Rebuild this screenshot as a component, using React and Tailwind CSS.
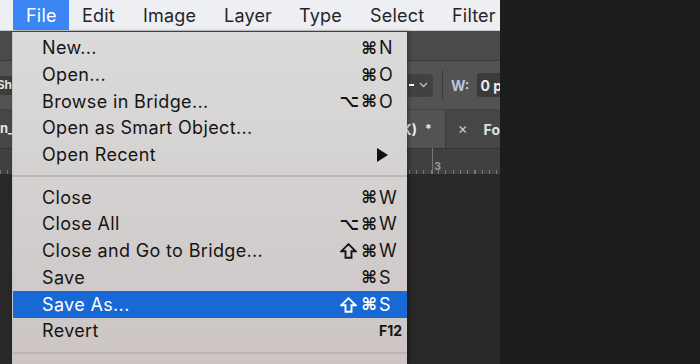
import React from "react";

const items = [
  { label: "New...", mods: "⌘", key: "N" },
  { label: "Open...", mods: "⌘", key: "O" },
  { label: "Browse in Bridge...", mods: "⌥⌘", key: "O" },
  { label: "Open as Smart Object..." },
  { label: "Open Recent", submenu: true },
  "sep",
  { label: "Close", mods: "⌘", key: "W" },
  { label: "Close All", mods: "⌥⌘", key: "W" },
  { label: "Close and Go to Bridge...", mods: "⇧⌘", key: "W" },
  { label: "Save", mods: "⌘", key: "S" },
  { label: "Save As...", mods: "⇧⌘", key: "S", active: true },
  { label: "Revert", key: "F12", small: true },
  "sep",
];

const menus = [
  { name: "File", w: "w-[56px]", active: true },
  { name: "Edit", w: "w-[61px]" },
  { name: "Image", w: "w-[81px]" },
  { name: "Layer", w: "w-[75px]" },
  { name: "Type", w: "w-[71px]" },
  { name: "Select", w: "w-[82px]" },
  { name: "Filter", w: "w-[61px]" },
];

function Shift({ color }) {
  return (
    <svg width="17" height="16" viewBox="0 0 17 16" className="mr-[2px]">
      <path
        d="M8.5 1.2 L15.5 8.2 L11.5 8.2 L11.5 14.8 L5.5 14.8 L5.5 8.2 L1.5 8.2 Z"
        fill="none"
        stroke={color}
        strokeWidth="1.9"
        strokeLinejoin="miter"
      />
    </svg>
  );
}

function Mods({ mods, color }) {
  if (!mods) return null;
  return (
    <span className="flex items-center">
      {[...mods].map((c, i) =>
        c === "⇧" ? (
          <Shift key={i} color={color} />
        ) : (
          <span
            key={i}
            className="ml-[2px] font-['DejaVu_Sans',sans-serif] text-[17px] font-bold leading-none"
          >
            {c}
          </span>
        )
      )}
    </span>
  );
}

function Row({ it }) {
  const color = it.active ? "text-white" : "text-[#151515]";
  return (
    <div
      className={`flex h-[26.7px] items-center pl-[29px] ${
        it.active ? "bg-[#1868d6]" : ""
      } ${color}`}
    >
      <span className="flex-1 whitespace-nowrap text-[18px] leading-none tracking-[0.35px]">
        {it.label}
      </span>
      {it.submenu ? (
        <svg width="12" height="14" viewBox="0 0 12 14" className="mr-[18px]">
          <path d="M0 0 L11 7 L0 14 Z" fill="#111" />
        </svg>
      ) : (
        <>
          <Mods mods={it.mods} color={it.active ? "#fff" : "#151515"} />
          <span
            className={`ml-[2px] w-[28px] whitespace-nowrap leading-none ${
              it.small ? "text-[14px] font-bold" : "text-[18px]"
            }`}
          >
            {it.key || ""}
          </span>
        </>
      )}
    </div>
  );
}

export default function App() {
  return (
    <div className="relative flex h-[364px] w-[700px] overflow-hidden bg-[#1c1c1c] font-['Inter','DejaVu_Sans',sans-serif]">
      {/* left app area */}
      <div className="flex h-full w-[500px] flex-col">
        {/* menubar */}
        <div className="flex h-[31px] items-stretch border-b border-[#c9c9cc] bg-[#eeeff2] pl-[13px] text-[18px] text-[#24242c]">
          {menus.map((m) => (
            <div
              key={m.name}
              className={`${m.w} flex items-center pl-[13px] tracking-[0.2px] ${
                m.active ? "bg-[#3a86f5] text-white" : ""
              }`}
            >
              {m.name}
            </div>
          ))}
        </div>
        {/* app header */}
        <div className="h-[30px] border-b border-[#383838] bg-[#4a4a4a]" />
        {/* options bar */}
        <div className="flex h-[48px] items-center bg-[#535353]">
          <div className="flex h-[19px] w-[12px] items-center justify-end overflow-hidden bg-[#3c3c3c] text-[12px] font-bold text-[#e0e0e0]">
            <span className="whitespace-nowrap">Sh</span>
          </div>
          <div className="ml-[396px] flex h-[23px] w-[25px] items-center justify-between rounded-[3px] bg-[#414141] pl-[1px] pr-[5px]">
            <div className="h-[2px] w-[5px] bg-white" />
            <svg width="9" height="6" viewBox="0 0 9 6">
              <path d="M1 1 L4.5 4.5 L8 1" stroke="#bbb" strokeWidth="1.4" fill="none" />
            </svg>
          </div>
          <div className="ml-[9px] h-[30px] w-[1px] bg-[#3c3c3c]" />
          <span className="ml-[8px] text-[14px] font-bold text-[#b9c6dc]">W:</span>
          <div className="ml-[7px] flex h-[24px] flex-1 items-center overflow-hidden whitespace-nowrap rounded-l-[3px] bg-[#3a3a3a] pl-[4px] text-[14px] font-bold text-[#e8ecf4]">
            0 p
          </div>
        </div>
        {/* tabs */}
        <div className="flex h-[39px] border-t border-[#444] bg-[#464646]">
          <div className="flex w-[60px] items-center text-[13px] font-bold text-[#e8e8e8]">n_</div>
          <div className="ml-[340px] flex w-[48px] items-center justify-end gap-[8px] bg-[#535353] pr-[13px] text-[14px] font-bold text-[#e8ecf4]">
            <span>K)</span>
            <span className="text-[12px]">*</span>
          </div>
          <div className="w-[1px] bg-[#3a3a3a]" />
          <div className="flex flex-1 items-center gap-[16px] pl-[12px] text-[14px] font-bold text-[#c8c8c8]">
            <span className="text-[15px] font-normal">×</span>
            <span className="text-[#dde2ea]">Fo</span>
          </div>
        </div>
        {/* ruler */}
        <div className="relative h-[26px] border-t border-[#333] bg-[#404040]">
          <div className="absolute bottom-0 left-0 right-0 h-[4px] bg-[repeating-linear-gradient(90deg,#777_0_1px,transparent_1px_7.3px)]" />
          <div className="absolute bottom-0 left-[432px] h-[26px] w-[1px] bg-[#777]" />
          <span className="absolute left-[434px] top-[9px] text-[11px] font-bold text-[#9a9a9a]">3</span>
        </div>
        {/* canvas */}
        <div className="flex-1 bg-[#282828]" />
      </div>
      <div className="flex-1 bg-[#1c1c1c]" />

      {/* dropdown menu */}
      <div className="absolute left-[12px] top-[32px] h-[332px] w-[395px] border-l border-[#c4c4c4] bg-[linear-gradient(180deg,#dbdbdb,#ccc5c4)] pt-[3px] shadow-[2px_0_4px_rgba(0,0,0,0.3)]">
        {items.map((it, i) =>
          it === "sep" ? (
            <div key={i} className="flex h-[16px] items-center">
              <div className="h-[2px] w-full bg-[#bab5b5]" />
            </div>
          ) : (
            <Row key={i} it={it} />
          )
        )}
      </div>
    </div>
  );
}
